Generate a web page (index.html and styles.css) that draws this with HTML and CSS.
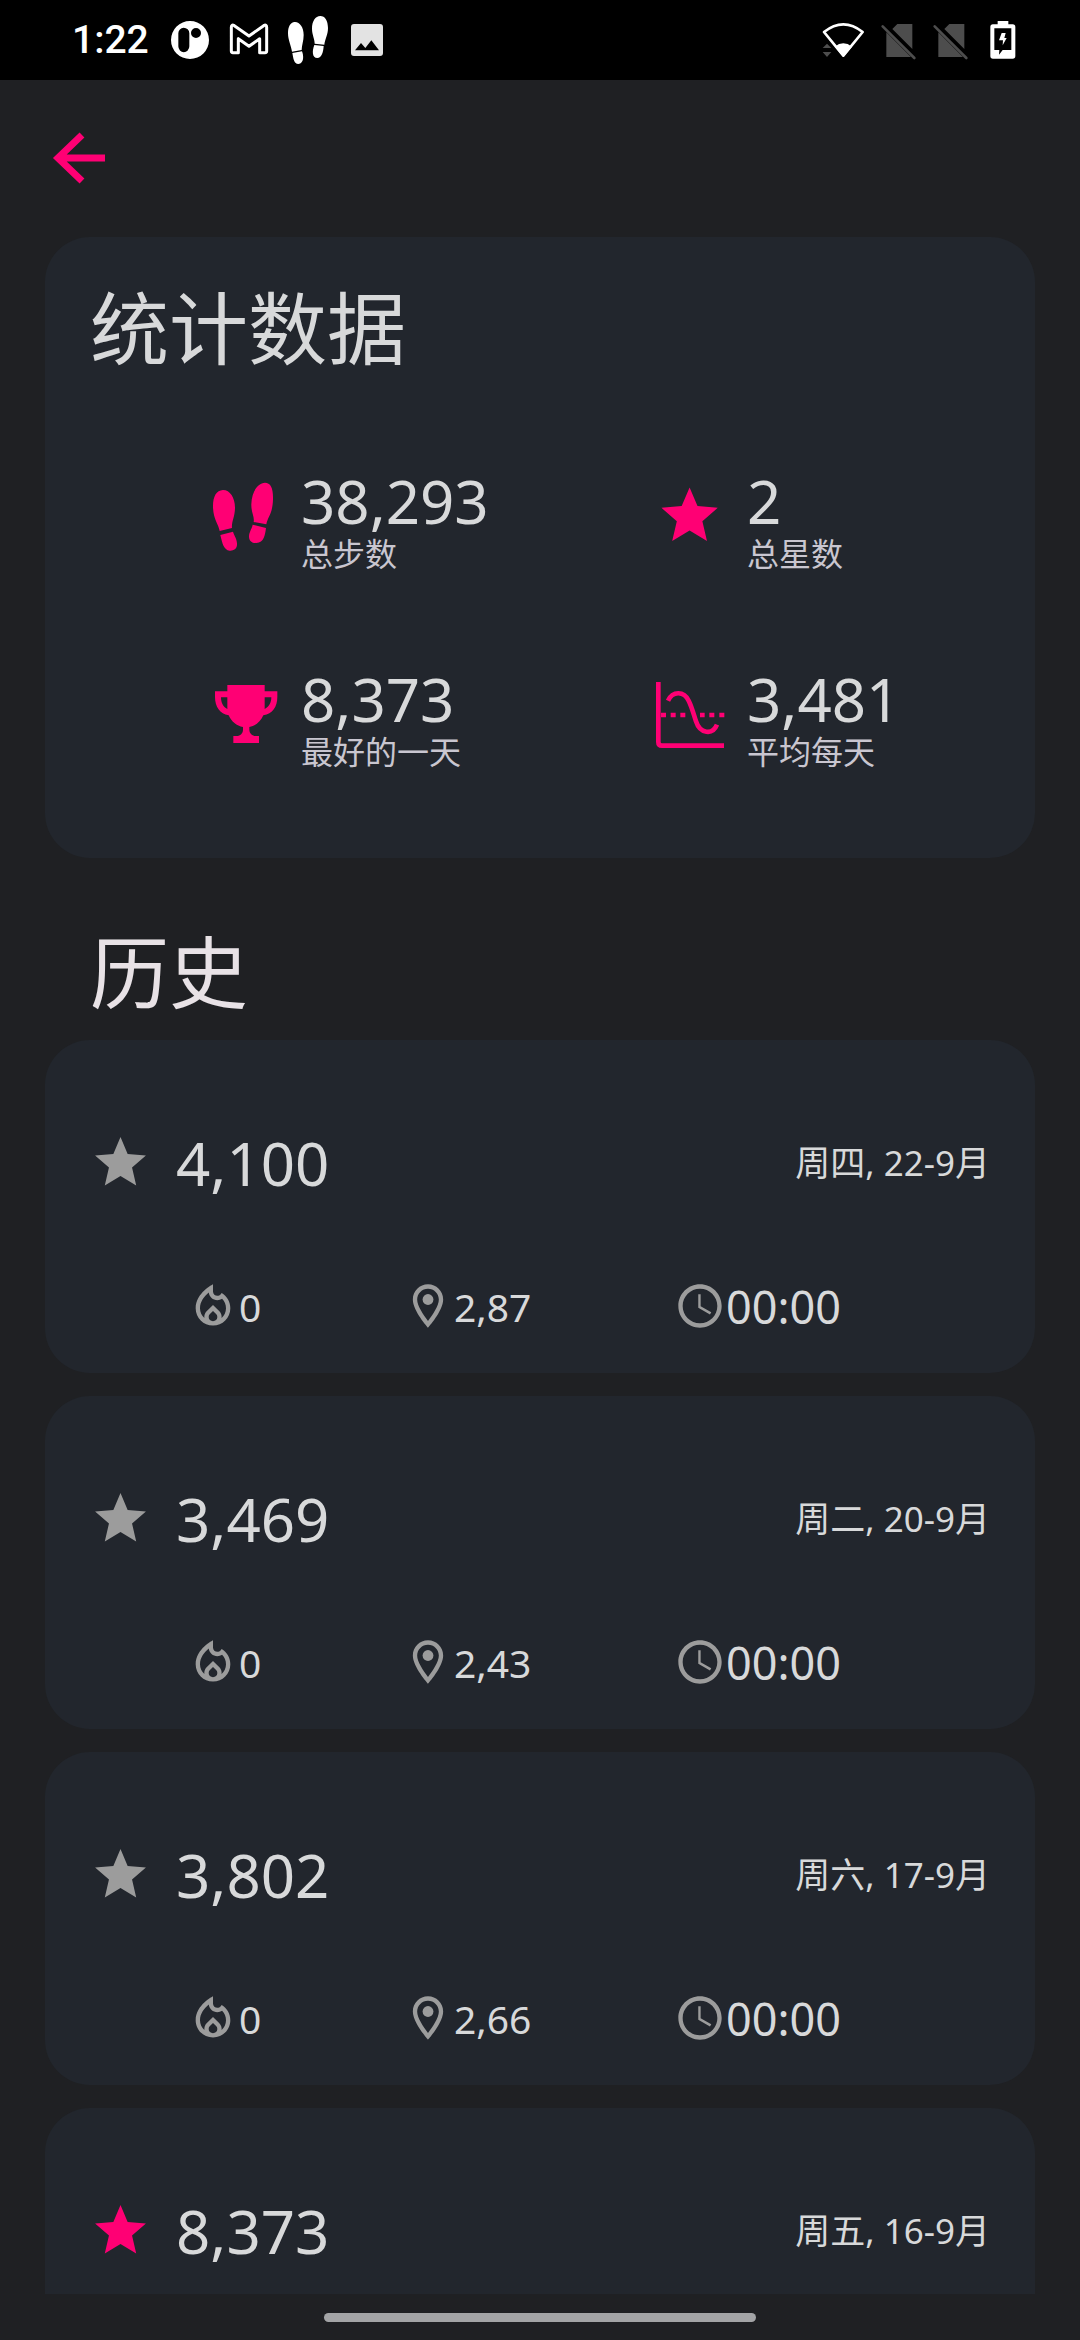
FILE: index.html
```html
<!DOCTYPE html>
<html lang="zh-CN">
<head>
<meta charset="utf-8">
<meta name="viewport" content="width=device-width, initial-scale=1">
<title>统计数据</title>
<link rel="stylesheet" href="styles.css">
</head>
<body>
<svg class="defs" aria-hidden="true">
  <symbol id="star" viewBox="0 0 24 24"><path d="M12 17.27L18.18 21l-1.64-7.03L22 9.24l-7.19-.61L12 2 9.19 8.63 2 9.24l5.46 4.73L5.82 21z"/></symbol>
  <symbol id="fire" viewBox="0 0 24 24"><path d="M16,6l-0.44,0.55C14.38,8.02,12,7.19,12,5.3V2c0,0-8,4-8,11c0,4.42,3.58,8,8,8s8-3.58,8-8C20,10.04,18.39,7.38,16,6z M12,19c-1.1,0-2-0.87-2-1.94c0-0.51,0.2-0.99,0.58-1.36L12,14.3l1.43,1.4C13.8,16.07,14,16.55,14,17.06C14,18.13,13.1,19,12,19z M15.96,17.5L15.96,17.5c0.04-0.36,0.22-1.89-1.13-3.22l0,0L12,11.5l-2.83,2.78l0,0c-1.36,1.34-1.17,2.88-1.13,3.22l0,0C6.79,16.4,6,14.79,6,13c0-3.16,2.13-5.65,4.03-7.25c0.23,1.99,1.93,3.55,3.99,3.55c0.78,0,1.54-0.23,2.18-0.66C17.34,9.78,18,11.35,18,13C18,14.79,17.21,16.4,15.96,17.5z"/></symbol>
  <symbol id="pin" viewBox="0 0 24 24"><path d="M12 2C8.13 2 5 5.13 5 9c0 5.25 7 13 7 13s7-7.75 7-13c0-3.87-3.13-7-7-7zM7 9c0-2.76 2.24-5 5-5s5 2.24 5 5c0 2.88-2.88 7.19-5 9.88C9.92 16.21 7 11.85 7 9z"/><circle cx="12" cy="9" r="2.5"/></symbol>
  <symbol id="clock" viewBox="0 0 24 24"><path d="M11.99 2C6.47 2 2 6.48 2 12s4.47 10 9.99 10C17.52 22 22 17.52 22 12S17.52 2 11.99 2zM12 20c-4.42 0-8-3.58-8-8s3.58-8 8-8 8 3.58 8 8-3.58 8-8 8zm.3-13.4H11.2v6.2l5.4 3.1.6-1-4.9-2.8z"/></symbol>
  <symbol id="no-sim" viewBox="284 48 144 144"><path d="M318 97L392 171H318zM336 87L351 72H396V147z"/><path d="M307 79L402 174" fill="none" stroke="currentColor" stroke-width="8" stroke-linecap="round"/></symbol>
</svg>

<div class="status">
  <div class="status-left">
    <time class="status-time">1:22</time>
    <svg class="status-icon" viewBox="498 48 144 144"><path fill-rule="evenodd" d="M570 63a57 57 0 1 0 0 114a57 57 0 1 0 0-114zM551 83a17 17 0 0 1 17 17v39a16 17 0 0 1-33 0v-39a17 17 0 0 1 16-17zM588 84a15 15 0 1 1 0 30a15 15 0 1 1 0-30z"/></svg>
    <svg class="status-icon" viewBox="675 48 144 144"><path d="M694 82Q694 72 703 77L747 108L791 77Q800 72 800 82V153Q800 158 795 158H779V116L747 139L715 116V158H699Q694 158 694 153z" fill="none" stroke="currentColor" stroke-width="9" stroke-linejoin="round"/></svg>
    <svg class="status-icon" viewBox="852 48 144 144"><path d="M884 66C899 65 911 82 911 105C911 124 905 136 905 150L876 155C873 136 864 120 864 100C864 80 871 67 884 66zM877 159L906 154C911 166 913 191 895 192C882 192 880 176 877 159zM961 48C975 48 984 62 984 84C984 104 975 118 973 134L944 131C944 116 936 104 936 86C936 64 946 48 961 48zM943 135L971 138C970 156 965 174 952 174C936 174 936 152 943 135z"/></svg>
    <svg class="status-icon" viewBox="1029 48 144 144"><path fill="#e3e3e3" fill-rule="evenodd" d="M1062 72H1140Q1149 72 1149 81V159Q1149 168 1140 168H1062Q1053 168 1053 159V81Q1053 72 1062 72zM1065 151H1137L1114 121L1096 144L1083 129z"/></svg>
  </div>
  <div class="status-right">
    <svg class="status-icon" viewBox="128 48 144 144"><path d="M131 96Q189 50 247 96L189 167z" fill="none" stroke="currentColor" stroke-width="8" stroke-linejoin="round"/><path d="M163 140Q189 120 215 140L189 171z"/><path fill="#4d4d4d" d="M127 144L140 131L153 144zM127 156H153L140 171z"/></svg>
    <svg class="status-icon dim"><use href="#no-sim"/></svg>
    <svg class="status-icon dim"><use href="#no-sim"/></svg>
    <svg class="status-icon" viewBox="596 48 144 144"><path fill-rule="evenodd" d="M652 63H684V73H697Q705 73 705 81V168Q705 176 697 176H638Q630 176 630 168V81Q630 73 638 73H652zM642 85V150H657L656 164L667 150H693V85z"/><path d="M664 99H676L672 114H679L667 136L668 121H656z"/></svg>
  </div>
</div>

<header class="topbar">
  <button class="back" type="button" aria-label="返回">
    <svg viewBox="0 0 54 52"><path d="M30 3L6 26L30 49M6 26H53" fill="none" stroke="currentColor" stroke-width="7"/></svg>
  </button>
</header>

<main class="content">
  <section class="card summary">
    <h1 class="title">统计数据</h1>
    <div class="stats">
      <div class="stat">
        <svg class="stat-icon" viewBox="501 747 228 228"><path d="M549 780C570 780 585 803 585 833C585 860 574 875 576 894L539 903C535 880 519 868 519 828C519 800 529 781 549 780zM541 915L579 905C584 920 592 928 591 945C590 957 580 963 569 962C551 960 547 940 541 915zM675 758C692 758 700 775 699 808C698 852 683 860 679 883L641 876C644 858 633 848 634 822C635 785 654 758 675 758zM638 884L678 894C675 915 672 938 649 939C636 940 627 932 627 920C627 906 635 898 638 884z"/></svg>
        <div><p class="value">38,293</p><p class="label">总步数</p></div>
      </div>
      <div class="stat">
        <svg class="stat-icon" viewBox="-1 -1 27 27"><use href="#star" width="24" height="24"/></svg>
        <div><p class="value">2</p><p class="label">总星数</p></div>
      </div>
      <div class="stat">
        <svg class="stat-icon" viewBox="501 351 228 228"><path fill-rule="evenodd" d="M562 375H674V394H712V411C712 440 698 462 670 466C662 485 646 498 628 501V509C628 520 637 528 647 528H657V549H580V528H590C601 528 609 520 609 509V501C590 498 574 485 566 466C540 462 525 440 525 411V394H562zM562 412H543C543 428 549 441 562 447zM674 412V447C687 441 694 428 694 412z"/></svg>
        <div><p class="value">8,373</p><p class="label">最好的一天</p></div>
      </div>
      <div class="stat">
        <svg class="stat-icon" viewBox="333 741 228 228"><g fill="none" stroke="currentColor" stroke-width="14"><path d="M349 756V936Q349 947 360 947H546"/><path d="M378 812C392 782 426 783 440 812C450 832 454 850 462 874C474 912 512 916 525 884"/><path d="M357 855H372M386 855H401M415 855H430M474 855H488M502 855H517M532 855H547"/></g></svg>
        <div><p class="value">3,481</p><p class="label">平均每天</p></div>
      </div>
    </div>
  </section>

  <h2 class="title history-title">历史</h2>

  <section class="history">
    <article class="card day">
      <div class="day-head"><svg class="day-star"><use href="#star"/></svg><span class="day-steps">4,100</span><time class="date">周四, 22-9月</time></div>
      <div class="details">
        <span class="detail"><svg><use href="#fire"/></svg>0</span>
        <span class="detail"><svg><use href="#pin"/></svg>2,87</span>
        <span class="detail duration"><svg><use href="#clock"/></svg>00:00</span>
      </div>
    </article>
    <article class="card day">
      <div class="day-head"><svg class="day-star"><use href="#star"/></svg><span class="day-steps">3,469</span><time class="date">周二, 20-9月</time></div>
      <div class="details">
        <span class="detail"><svg><use href="#fire"/></svg>0</span>
        <span class="detail"><svg><use href="#pin"/></svg>2,43</span>
        <span class="detail duration"><svg><use href="#clock"/></svg>00:00</span>
      </div>
    </article>
    <article class="card day">
      <div class="day-head"><svg class="day-star"><use href="#star"/></svg><span class="day-steps">3,802</span><time class="date">周六, 17-9月</time></div>
      <div class="details">
        <span class="detail"><svg><use href="#fire"/></svg>0</span>
        <span class="detail"><svg><use href="#pin"/></svg>2,66</span>
        <span class="detail duration"><svg><use href="#clock"/></svg>00:00</span>
      </div>
    </article>
    <article class="card day">
      <div class="day-head"><svg class="day-star earned"><use href="#star"/></svg><span class="day-steps">8,373</span><time class="date">周五, 16-9月</time></div>
    </article>
  </section>
</main>

<footer class="navbar"><div class="home-handle"></div></footer>
</body>
</html>
```
FILE: styles.css
```css
:root {
  --bg: #1f2023;
  --card: #22262d;
  --text: #d8d9da;
  --muted: #c9c6d0;
  --icon: #9c9c9c;
  --accent: #ff0074;
}

* {
  box-sizing: border-box;
}

body {
  margin: 0;
  height: 100vh;
  display: flex;
  flex-direction: column;
  background: var(--bg);
  color: var(--text);
  font-family: "Noto Sans", "Noto Sans CJK SC", sans-serif;
}

h1, h2, p {
  margin: 0;
  font-weight: 400;
}

svg {
  display: block;
  flex: none;
  fill: currentColor;
}

.defs {
  display: none;
}

/* System status bar */
.status {
  flex: none;
  height: 80px;
  padding: 0 53px 0 72px;
  display: flex;
  align-items: center;
  justify-content: space-between;
  background: #000;
  color: #fff;
}

.status-left {
  display: flex;
  align-items: center;
  gap: 11px;
}

.status-right {
  display: flex;
  gap: 4px;
}

.status-time {
  width: 83px;
  font: 500 39px/48px Roboto, sans-serif;
}

.status-icon {
  width: 48px;
  height: 48px;
  overflow: visible;
}

.dim {
  color: #4d4d4d;
}

/* App bar */
.topbar {
  flex: none;
  padding: 52px 52px 53px;
}

.back {
  display: block;
  padding: 0;
  border: 0;
  background: none;
  color: var(--accent);
  cursor: pointer;
}

.back svg {
  width: 54px;
  height: 52px;
}

.content {
  flex: 1;
  min-height: 0;
  padding: 0 45px;
  overflow-y: auto;
  scrollbar-width: none;
}

.card {
  border-radius: 45px;
  background: var(--card);
}

.title {
  font: 400 79px/86px "Noto Sans CJK SC", sans-serif;
}

/* Totals */
.summary {
  padding: 45px 45px 90px;
}

.stats {
  margin-top: 100px;
  padding-left: 117px;
  display: grid;
  grid-template-columns: 446fr 337fr;
  row-gap: 96px;
}

.stat {
  display: flex;
  align-items: center;
  gap: 18px;
}

.stat-icon {
  width: 76px;
  height: 76px;
  margin-bottom: 4px;
  color: var(--accent);
}

.value {
  font-size: 60px;
  line-height: 66px;
}

.label {
  color: var(--muted);
  font: 400 32px/36px "Noto Sans CJK SC", sans-serif;
}

/* History */
.history-title {
  margin: 68px 45px 28px;
  color: #e8e2e6;
}

.history {
  display: flex;
  flex-direction: column;
  gap: 23px;
}

.day {
  min-height: 333px;
  padding: 82px 45px 40px;
}

.day-head {
  display: flex;
  align-items: center;
  line-height: 82px;
}

.day-star {
  width: 61px;
  height: 61px;
  margin: 0 25px 2px 0;
  color: var(--icon);
}

.earned {
  color: var(--accent);
}

.day-steps {
  font-size: 60px;
}

.date {
  margin-left: auto;
  font-size: 35px;
}

.details {
  margin-top: 77px;
  padding-left: 97px;
  display: grid;
  grid-template-columns: 215fr 272fr 316fr;
}

.detail {
  display: flex;
  align-items: center;
  font-size: 39px;
  line-height: 52px;
}

.detail svg {
  width: 52px;
  height: 52px;
  margin-bottom: 2px;
  color: var(--icon);
}

.detail {
  height: 52px;
}

.duration {
  font-size: 45px;
}

/* Gesture navigation */
.navbar {
  flex: none;
  height: 46px;
  display: flex;
  align-items: center;
  justify-content: center;
}

.home-handle {
  width: 40%;
  height: 9px;
  border-radius: 5px;
  background: #a3a4a6;
}
```
